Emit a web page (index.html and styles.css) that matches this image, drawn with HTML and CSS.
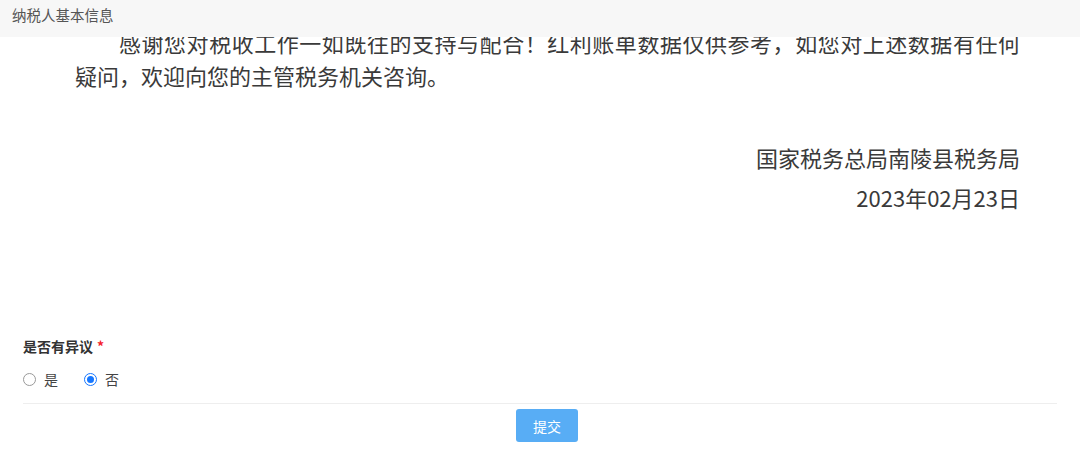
FILE: index.html
```html
<!DOCTYPE html>
<html lang="zh-CN">
<head>
    <meta charset="UTF-8">
    <meta name="viewport" content="width=device-width, initial-scale=1.0">
    <title>纳税人基本信息</title>
    <link rel="stylesheet" href="styles.css">
</head>
<body>
    <div class="topbar">纳税人基本信息</div>

    <div class="letter">
        <p class="letter-body">感谢您对税收工作一如既往的支持与配合！红利账单数据仅供参考，如您对上述数据有任何疑问，欢迎向您的主管税务机关咨询。</p>
        <div class="sign">
            <div>国家税务总局南陵县税务局</div>
            <div>2023年02月23日</div>
        </div>
    </div>

    <form class="form">
        <div class="form-label">是否有异议<span class="required">*</span></div>
        <div class="radio-group">
            <label class="radio"><span class="radio-dot"></span>是</label>
            <label class="radio checked"><span class="radio-dot"></span>否</label>
        </div>
        <div class="form-footer">
            <button type="button" class="submit-btn">提交</button>
        </div>
    </form>
</body>
</html>
```

FILE: styles.css
```css
body {
    margin: 0;
    font-family: "Noto Sans CJK SC", "Noto Sans", sans-serif;
    color: #333;
    background-color: #fff;
    height: 452px;
    overflow: hidden;
}

.topbar {
    position: fixed;
    top: 0;
    left: 0;
    right: 0;
    height: 37px;
    padding-left: 12px;
    background-color: #f7f7f7;
    color: #555;
    font-size: 14.5px;
    line-height: 30px;
    z-index: 10;
}

.letter {
    padding-top: 26px;
    margin: 0 60px 0 75px;
    font-size: 22px;
    color: #3a3a3a;
}

.letter-body {
    margin: 0;
    line-height: 33px;
    text-indent: 2em;
    text-align: justify;
}

.sign {
    margin-top: 45px;
    text-align: right;
    line-height: 40px;
}

.form {
    margin: 119px 23px 0 23px;
}

.form-label {
    font-size: 14px;
    font-weight: bold;
    line-height: 20px;
    color: #333;
}

.required {
    color: #f5222d;
    margin-left: 4px;
}

.radio-group {
    display: flex;
    gap: 26px;
    margin-top: 13px;
    padding-bottom: 14px;
    border-bottom: 1px solid #eee;
}

.radio {
    display: flex;
    align-items: center;
    gap: 8px;
    font-size: 14px;
    line-height: 20px;
    color: #444;
}

.radio-dot {
    width: 11px;
    height: 11px;
    border: 1px solid #999;
    border-radius: 50%;
    background-color: #fff;
    position: relative;
}

.radio.checked .radio-dot {
    border-color: #1677ff;
}

.radio.checked .radio-dot::after {
    content: "";
    position: absolute;
    top: 2px;
    left: 2px;
    width: 7px;
    height: 7px;
    border-radius: 50%;
    background-color: #1677ff;
}

.form-footer {
    display: flex;
    justify-content: center;
    padding-left: 14px;
    margin-top: 5px;
}

.submit-btn {
    width: 62px;
    height: 33px;
    border: none;
    border-radius: 3px;
    background-color: #58adf5;
    color: #fff;
    font-family: inherit;
    font-size: 14px;
    cursor: pointer;
}
```
